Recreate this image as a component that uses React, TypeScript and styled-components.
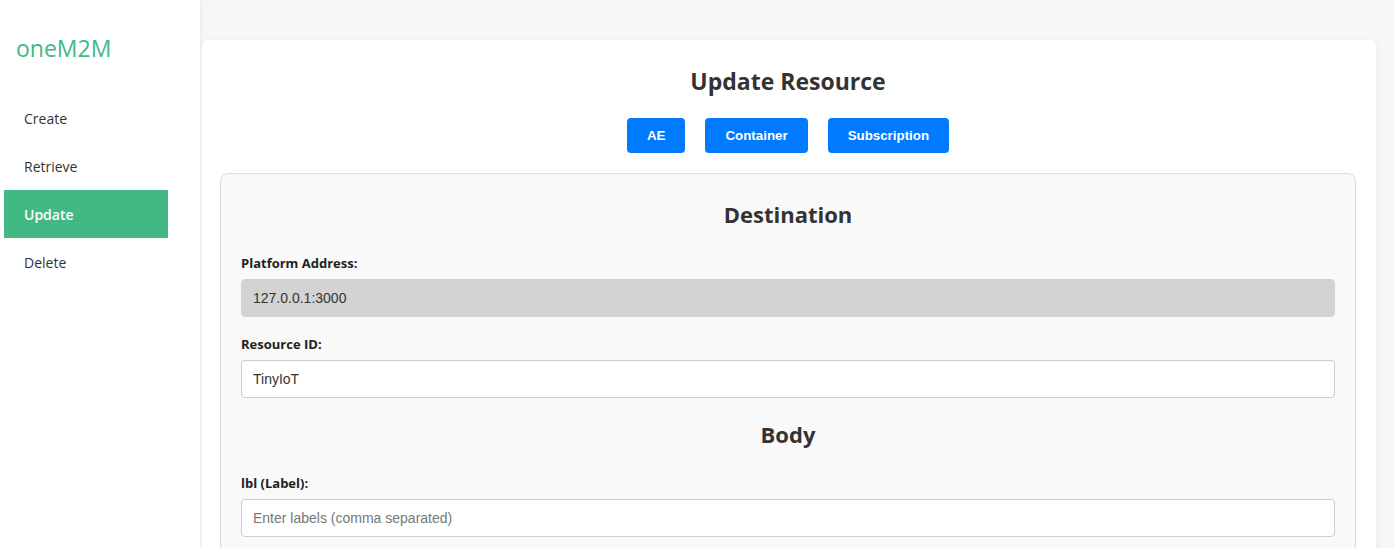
import React from "react";
import styled, { createGlobalStyle } from "styled-components";

const Global = createGlobalStyle`
  html, body { margin: 0; padding: 0; }
  body {
    background: #f7f7f7;
    font-family: "Open Sans", "Noto Sans", sans-serif;
    color: #333;
    overflow: hidden;
  }
  * { box-sizing: border-box; }
`;

const Layout = styled.div`
  display: flex;
  height: 548px;
  overflow: hidden;
`;

const Sidebar = styled.aside`
  width: 200px;
  flex-shrink: 0;
  background: #fff;
  box-shadow: 1px 0 4px rgba(0, 0, 0, 0.06);
  padding: 32px 32px 0 4px;
  position: relative;
  z-index: 1;
`;

const Brand = styled.div`
  font-family: "Open Sans", sans-serif;
  font-size: 23px;
  line-height: 32px;
  color: #42b983;
  padding-left: 12px;
  margin-bottom: 30px;
`;

const NavList = styled.nav`
  display: flex;
  flex-direction: column;
`;

const NavItem = styled.div<{ $active?: boolean }>`
  height: 48px;
  display: flex;
  align-items: center;
  padding-left: 20px;
  font-size: 14px;
  color: ${(p) => (p.$active ? "#fff" : "#333")};
  background: ${(p) => (p.$active ? "#42b983" : "transparent")};
  font-weight: ${(p) => (p.$active ? 600 : 400)};
`;

const Main = styled.main`
  flex: 1;
  padding: 40px 18px 0 1px;
  overflow: hidden;
`;

const Card = styled.section`
  background: #fff;
  border-radius: 8px;
  box-shadow: 0 1px 6px rgba(0, 0, 0, 0.06);
  padding: 20px 20px 0 19px;
  min-height: 520px;
`;

const Title = styled.h2`
  margin: 0 0 16px;
  text-align: center;
  font-size: 23px;
  line-height: 42px;
  font-weight: 700;
  color: #333;
`;

const TypeBar = styled.div`
  display: flex;
  justify-content: center;
  gap: 20px;
  margin-bottom: 20px;
`;

const TypeButton = styled.button`
  height: 35px;
  padding: 0 20px;
  border: none;
  border-radius: 4px;
  background: #007bff;
  color: #fff;
  font-family: "Liberation Sans", Arial, sans-serif;
  font-weight: 700;
  font-size: 13.333px;
`;

const FormSection = styled.div`
  background: #f9f9f9;
  border: 1px solid #ddd;
  border-radius: 8px;
  padding: 23px 20px 20px;
`;

const SectionHeading = styled.h3`
  margin: 0 0 23px;
  text-align: center;
  font-size: 22px;
  line-height: 35px;
  font-weight: 700;
  color: #333;
`;

const FieldGroup = styled.div`
  margin-bottom: 19px;
`;

const Label = styled.label`
  display: block;
  font-size: 13px;
  line-height: 16px;
  font-weight: 700;
  color: #222;
  margin-bottom: 8px;
`;

const Input = styled.input<{ $disabled?: boolean }>`
  display: block;
  width: 100%;
  height: 38px;
  padding: 0 11px;
  border: 1px solid ${(p) => (p.$disabled ? "#d4d3d4" : "#ccc")};
  border-radius: 4px;
  background: ${(p) => (p.$disabled ? "#d4d3d4" : "#fff")};
  font-family: "Liberation Sans", Arial, sans-serif;
  font-size: 14px;
  color: #333;
  outline: none;
  &::placeholder { color: #777; }
`;

export default function App() {
  return (
    <>
      <Global />
      <Layout>
        <Sidebar>
          <Brand>oneM2M</Brand>
          <NavList>
            <NavItem>Create</NavItem>
            <NavItem>Retrieve</NavItem>
            <NavItem $active>Update</NavItem>
            <NavItem>Delete</NavItem>
          </NavList>
        </Sidebar>
        <Main>
          <Card>
            <Title>Update Resource</Title>
            <TypeBar>
              <TypeButton>AE</TypeButton>
              <TypeButton>Container</TypeButton>
              <TypeButton>Subscription</TypeButton>
            </TypeBar>
            <FormSection>
              <SectionHeading>Destination</SectionHeading>
              <FieldGroup>
                <Label>Platform Address:</Label>
                <Input $disabled readOnly value="127.0.0.1:3000" />
              </FieldGroup>
              <FieldGroup>
                <Label>Resource ID:</Label>
                <Input readOnly value="TinyIoT" />
              </FieldGroup>
              <SectionHeading>Body</SectionHeading>
              <FieldGroup>
                <Label>lbl (Label):</Label>
                <Input placeholder="Enter labels (comma separated)" />
              </FieldGroup>
            </FormSection>
          </Card>
        </Main>
      </Layout>
    </>
  );
}
